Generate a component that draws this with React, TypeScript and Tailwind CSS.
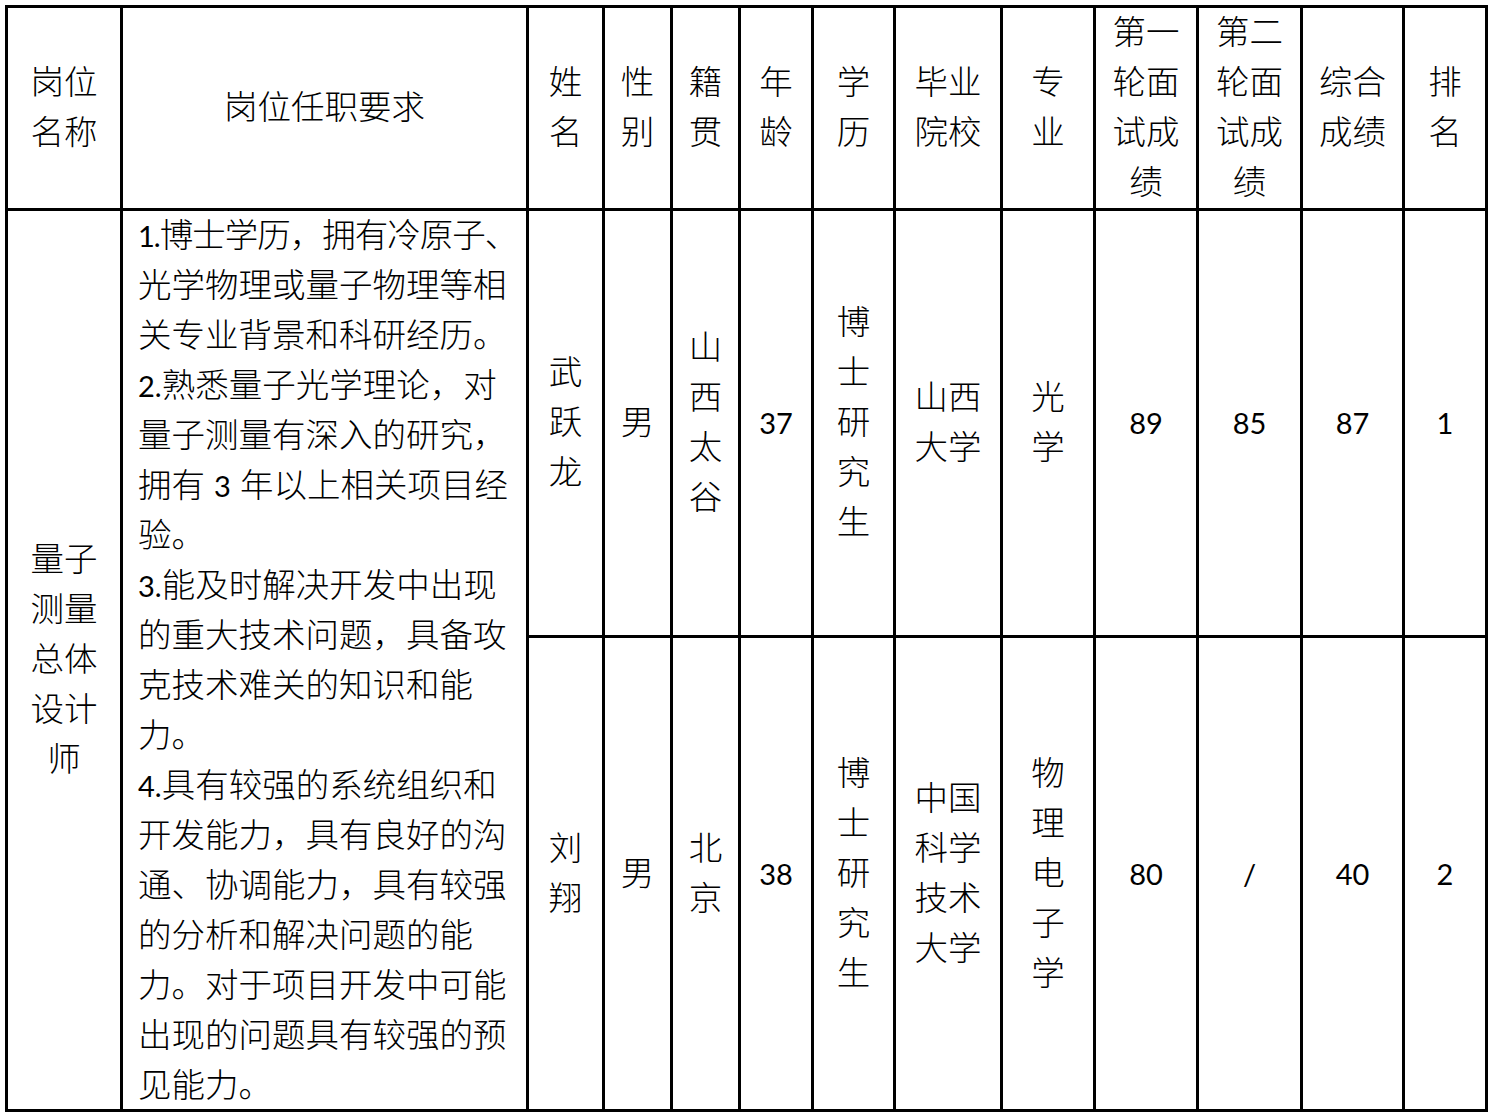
import type { ReactNode } from "react";

const font = "font-['Lato','Noto_Sans_CJK_SC',sans-serif]";

/** Calibri-sized digits: Lato is wider than Calibri, so set it a bit smaller. */
function Num({ children }: { children: ReactNode }) {
  return <span className="text-[29px] font-normal">{children}</span>;
}

/** One 50px text line, fixed so mixed fonts can't grow the line box. */
function Line({ children }: { children: ReactNode }) {
  return <div className="h-[50px] whitespace-nowrap leading-[46px]">{children}</div>;
}

function Cell({ lines, className = "" }: { lines: ReactNode[]; className?: string }) {
  return (
    <div className={`flex flex-col items-center justify-center bg-white text-center ${className}`}>
      {lines.map((line, i) => (
        <Line key={i}>{line}</Line>
      ))}
    </div>
  );
}

const headers: string[][] = [
  ["岗位", "名称"],
  ["岗位任职要求"],
  ["姓", "名"],
  ["性", "别"],
  ["籍", "贯"],
  ["年", "龄"],
  ["学", "历"],
  ["毕业", "院校"],
  ["专", "业"],
  ["第一", "轮面", "试成", "绩"],
  ["第二", "轮面", "试成", "绩"],
  ["综合", "成绩"],
  ["排", "名"],
];

const requirements: ReactNode[] = [
  <span className="tracking-[-1px]">
    <Num>1.</Num>博士学历，拥有冷原子、
  </span>,
  "光学物理或量子物理等相",
  "关专业背景和科研经历。",
  <>
    <Num>2.</Num>熟悉量子光学理论，对
  </>,
  "量子测量有深入的研究，",
  <>
    拥有 <Num>3</Num> 年以上相关项目经
  </>,
  "验。",
  <>
    <Num>3.</Num>能及时解决开发中出现
  </>,
  "的重大技术问题，具备攻",
  "克技术难关的知识和能",
  "力。",
  <>
    <Num>4.</Num>具有较强的系统组织和
  </>,
  "开发能力，具有良好的沟",
  "通、协调能力，具有较强",
  "的分析和解决问题的能",
  "力。对于项目开发中可能",
  "出现的问题具有较强的预",
  "见能力。",
];

const candidates: ReactNode[][][] = [
  [
    ["武", "跃", "龙"],
    ["男"],
    ["山", "西", "太", "谷"],
    [<Num>37</Num>],
    ["博", "士", "研", "究", "生"],
    ["山西", "大学"],
    ["光", "学"],
    [<Num>89</Num>],
    [<Num>85</Num>],
    [<Num>87</Num>],
    [<Num>1</Num>],
  ],
  [
    ["刘", "翔"],
    ["男"],
    ["北", "京"],
    [<Num>38</Num>],
    ["博", "士", "研", "究", "生"],
    ["中国", "科学", "技术", "大学"],
    ["物", "理", "电", "子", "学"],
    [<Num>80</Num>],
    [<Num>/</Num>],
    [<Num>40</Num>],
    [<Num>2</Num>],
  ],
];

export default function App() {
  return (
    <div className={`min-h-screen bg-white pl-[5px] pt-[5px] text-[33.5px] font-light leading-[50px] text-black ${font}`}>
      <div className="inline-grid grid-cols-[112px_403px_73px_65px_65px_70px_79px_104px_90px_100px_101px_99px_80px] grid-rows-[200px_424px_471px] gap-[3px] bg-black p-[3px]">
        {headers.map((lines, i) => (
          <Cell key={i} lines={lines} />
        ))}

        <Cell className="row-span-2" lines={["量子", "测量", "总体", "设计", "师"]} />
        <div className="row-span-2 bg-white pl-[15px]">
          {requirements.map((line, i) => (
            <Line key={i}>{line}</Line>
          ))}
        </div>

        {candidates.map((row, r) =>
          row.map((lines, c) => <Cell key={`${r}-${c}`} lines={lines} />)
        )}
      </div>
    </div>
  );
}
